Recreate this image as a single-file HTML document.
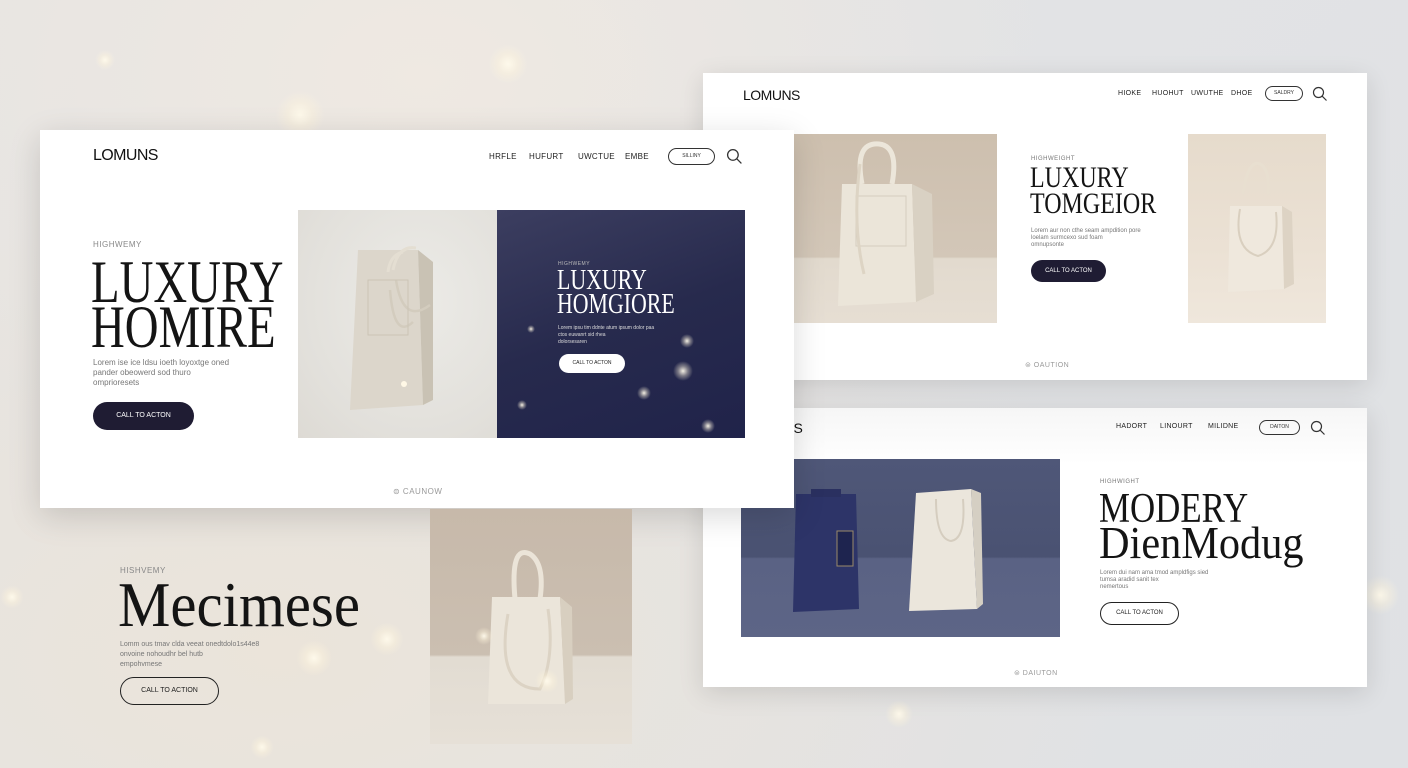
<!DOCTYPE html>
<html><head><meta charset="utf-8"><style>
*{margin:0;padding:0;box-sizing:border-box}
body{width:1408px;height:768px;overflow:hidden;position:relative;font-family:"Liberation Sans",sans-serif;
background:radial-gradient(ellipse at 20% 85%,#ebe4da 0%,rgba(235,228,218,0) 55%),radial-gradient(ellipse at 30% 10%,#efe9e2 0%,rgba(239,233,226,0) 45%),linear-gradient(135deg,#e6e4e2 0%,#e2e3e5 50%,#dfe1e4 100%)}
.a{position:absolute}
.card{position:absolute;background:#fff;box-shadow:0 6px 24px rgba(0,0,0,.12)}
.serif{font-family:"Liberation Serif",serif;color:#141414;line-height:1;transform-origin:0 0;white-space:nowrap}
.nav{font-size:8px;color:#222;letter-spacing:.3px}
.sm{font-size:7px;color:#777;letter-spacing:.5px}
.body{font-size:8px;color:#777;line-height:10px}
.pill{position:absolute;border:1px solid #333;border-radius:12px;font-size:5px;text-align:center;color:#333}
.dot{position:absolute;border-radius:50%;background:radial-gradient(circle,rgba(255,250,235,.95) 0%,rgba(255,245,220,.4) 35%,rgba(255,245,220,0) 70%)}
</style></head><body>

<div class="dot" style="left:488px;top:44px;width:40px;height:40px"></div>
<div class="dot" style="left:275px;top:90px;width:50px;height:50px"></div>
<div class="dot" style="left:95px;top:50px;width:20px;height:20px"></div>
<div class="dot" style="left:0px;top:585px;width:24px;height:24px"></div>
<div class="dot" style="left:296px;top:640px;width:36px;height:36px"></div>
<div class="dot" style="left:370px;top:622px;width:34px;height:34px"></div>
<div class="dot" style="left:250px;top:735px;width:24px;height:24px"></div>
<div class="dot" style="left:1360px;top:575px;width:40px;height:40px"></div>
<div class="dot" style="left:885px;top:700px;width:28px;height:28px"></div>

<!-- top-right card -->
<div class="card" style="left:703px;top:73px;width:664px;height:307px">
  <div class="a" style="left:40px;top:14px;font-size:14px;letter-spacing:-.5px;color:#111">LOMUNS</div>
  <div class="a nav" style="left:415px;top:17px;font-size:7px">HIOKE</div>
  <div class="a nav" style="left:449px;top:17px;font-size:7px">HUOHUT</div>
  <div class="a nav" style="left:488px;top:17px;font-size:7px">UWUTHE</div>
  <div class="a nav" style="left:528px;top:17px;font-size:7px">DHOE</div>
  <div class="pill" style="left:562px;top:13px;width:38px;height:15px;line-height:13px">SALDRY</div>
  <svg class="a" style="left:609px;top:13px" width="16" height="16" viewBox="0 0 16 16"><circle cx="6.5" cy="6.5" r="5" fill="none" stroke="#333" stroke-width="1.2"/><path d="M10.2 10.2L14.5 14.5" stroke="#333" stroke-width="1.2"/></svg>
  <div class="a" style="left:91px;top:61px;width:203px;height:189px;background:linear-gradient(180deg,#cdbfae 0%,#d3c7b8 65%,#e2dace 66%,#e6ded3 100%)">
    <svg width="203" height="189" viewBox="0 0 203 189"><path d="M68 50 Q60 8 85 10 Q105 12 98 50" fill="none" stroke="#ece6da" stroke-width="5"/><path d="M48 50 L118 50 L122 168 L44 172 Z" fill="#ebe5d9"/><path d="M118 50 L138 60 L140 160 L122 168Z" fill="#d9d1c3"/><rect x="62" y="62" width="50" height="50" fill="none" stroke="#d5cdbe"/><path d="M66 30 Q58 90 70 140" fill="none" stroke="#ddd4c4" stroke-width="3"/></svg>
  </div>
  <div class="a sm" style="left:328px;top:83px;font-size:6px">HIGHWEIGHT</div>
  <div class="a serif" style="left:327px;top:90px;font-size:30px;transform:scaleX(.8)">LUXURY</div>
  <div class="a serif" style="left:327px;top:116px;font-size:30px;transform:scaleX(.8)">TOMGEIOR</div>
  <div class="a body" style="left:328px;top:155px;font-size:6px;line-height:7px">Lorem aur non cthe seam ampdition pore<br>loelam surmcexo sud foam<br>omnupsonte</div>
  <div class="a" style="left:328px;top:187px;width:75px;height:22px;border-radius:11px;background:#1f1c33;color:#fff;font-size:6px;text-align:center;line-height:22px">CALL TO ACTON</div>
  <div class="a" style="left:485px;top:61px;width:138px;height:189px;background:linear-gradient(180deg,#e6dbcc 0%,#ebe1d4 60%,#efe7dc 100%)">
    <svg width="138" height="189" viewBox="0 0 138 189"><path d="M55 60 Q60 25 72 30 Q82 35 80 60" fill="none" stroke="#e8dfd0" stroke-width="3"/><path d="M42 72 L94 72 L96 155 L40 158Z" fill="#efe8dd"/><path d="M94 72 L104 78 L106 150 L96 155Z" fill="#ddd3c4"/><path d="M52 75 Q45 115 70 122 Q92 115 88 78" fill="none" stroke="#d9cfbf" stroke-width="2"/></svg>
  </div>
  <div class="a sm" style="left:322px;top:288px;font-size:7px;color:#999">⊜ OAUTION</div>
</div>

<!-- bottom-right card -->
<div class="card" style="left:703px;top:408px;width:664px;height:279px;background:linear-gradient(180deg,#f6f6f6 0%,#fff 20%)">
  <div class="a" style="left:40px;top:12px;font-size:14px;color:#111">LOMUNS</div>
  <div class="a nav" style="left:413px;top:15px;font-size:7px">HADORT</div>
  <div class="a nav" style="left:457px;top:15px;font-size:7px">LINOURT</div>
  <div class="a nav" style="left:505px;top:15px;font-size:7px">MILIDNE</div>
  <div class="pill" style="left:556px;top:12px;width:41px;height:15px;line-height:13px">DAITON</div>
  <svg class="a" style="left:607px;top:12px" width="16" height="16" viewBox="0 0 16 16"><circle cx="6.5" cy="6.5" r="5" fill="none" stroke="#333" stroke-width="1.2"/><path d="M10.2 10.2L14.5 14.5" stroke="#333" stroke-width="1.2"/></svg>
  <div class="a" style="left:38px;top:51px;width:319px;height:178px;background:linear-gradient(180deg,#4f5778 0%,#4a5272 55%,#5a6284 56%,#5d6586 100%)">
    <svg width="319" height="178" viewBox="0 0 319 178"><path d="M55 35 L115 35 L118 150 L52 153Z" fill="#2d3468"/><rect x="70" y="30" width="30" height="8" fill="#2a3060"/><rect x="96" y="72" width="16" height="35" fill="#1e244f" stroke="#9a8a6a"/><path d="M175 34 L230 30 L236 150 L168 152Z" fill="#ebe6dc"/><path d="M230 30 L240 34 L242 145 L236 150Z" fill="#d5cfc3"/><path d="M195 40 Q195 80 210 82 Q225 80 222 40" fill="none" stroke="#d5cdbf" stroke-width="2"/></svg>
  </div>
  <div class="a sm" style="left:397px;top:71px;font-size:6px">HIGHWIGHT</div>
  <div class="a serif" style="left:396px;top:80px;font-size:42px;transform:scaleX(.83)">MODERY</div>
  <div class="a serif" style="left:396px;top:112px;font-size:46px;transform:scaleX(.92)">DienModug</div>
  <div class="a body" style="left:397px;top:162px;font-size:6px;line-height:7px">Lorem dui nam ama tmod ampldfigs sied<br>tumsa aradid sanit tex<br>nemertous</div>
  <div class="a" style="left:397px;top:194px;width:79px;height:23px;border-radius:12px;border:1px solid #222;font-size:6px;text-align:center;line-height:21px;color:#222">CALL TO ACTON</div>
  <div class="a sm" style="left:311px;top:261px;font-size:7px;color:#999">⊜ DAIUTON</div>
</div>

<!-- front card -->
<div class="card" style="left:40px;top:130px;width:754px;height:378px;box-shadow:0 8px 30px rgba(0,0,0,.15)">
  <div class="a" style="left:53px;top:17px;font-size:16px;letter-spacing:-.6px;color:#111">LOMUNS</div>
  <div class="a nav" style="left:449px;top:22px">HRFLE</div>
  <div class="a nav" style="left:489px;top:22px">HUFURT</div>
  <div class="a nav" style="left:538px;top:22px">UWCTUE</div>
  <div class="a nav" style="left:585px;top:22px">EMBE</div>
  <div class="pill" style="left:628px;top:18px;width:47px;height:17px;line-height:15px">SILLINY</div>
  <svg class="a" style="left:686px;top:18px" width="17" height="17" viewBox="0 0 16 16"><circle cx="6.5" cy="6.5" r="5" fill="none" stroke="#333" stroke-width="1.2"/><path d="M10.2 10.2L14.5 14.5" stroke="#333" stroke-width="1.2"/></svg>
  <div class="a sm" style="left:53px;top:110px;font-size:8px;color:#888">HIGHWEMY</div>
  <div class="a serif" style="left:51px;top:122px;font-size:60px;transform:scaleX(.78)">LUXURY</div>
  <div class="a serif" style="left:51px;top:167px;font-size:60px;transform:scaleX(.78)">HOMIRE</div>
  <div class="a body" style="left:53px;top:228px;font-size:8px;line-height:10px">Lorem ise ice ldsu ioeth loyoxtge oned<br>pander obeowerd sod thuro<br>omprioresets</div>
  <div class="a" style="left:53px;top:272px;width:101px;height:28px;border-radius:14px;background:#1f1c33;color:#fff;font-size:7px;text-align:center;line-height:28px">CALL TO ACTON</div>
  <div class="a" style="left:258px;top:80px;width:199px;height:228px;background:radial-gradient(ellipse at 60% 40%,#ecebe7 0%,#e2e0db 70%,#dddad4 100%)">
    <svg width="199" height="228" viewBox="0 0 199 228"><path d="M60 40 L120 40 L125 195 L52 200Z" fill="#dcd6cb"/><path d="M120 40 L135 52 L135 190 L125 195Z" fill="#c9c2b4"/><path d="M95 60 Q100 35 118 38 M90 62 Q92 45 105 42" fill="none" stroke="#e4ded2" stroke-width="3"/><path d="M92 80 Q96 130 115 112 M98 70 Q105 115 132 95" fill="none" stroke="#d3ccbe" stroke-width="2.5"/><rect x="70" y="70" width="40" height="55" fill="none" stroke="#cbc4b6"/><circle cx="106" cy="174" r="3" fill="#fff8e6"/></svg>
  </div>
  <div class="a" style="left:457px;top:80px;width:248px;height:228px;background:linear-gradient(160deg,#3c3e60 0%,#272a4d 50%,#20234a 100%);overflow:hidden">
    <div class="a sm" style="left:61px;top:51px;font-size:5px;color:#bbb">HIGHWEMY</div>
    <div class="a serif" style="left:60px;top:57px;font-size:28px;color:#fff;transform:scaleX(.78)">LUXURY</div>
    <div class="a serif" style="left:60px;top:81px;font-size:28px;color:#fff;transform:scaleX(.78)">HOMGIORE</div>
    <div class="a" style="left:61px;top:115px;font-size:5px;color:#ddd;line-height:7px">Lorem ipsu tim ddnte atum ipsum dolor paa<br>ctos euwanrt sid rhea<br>dolorsesaren</div>
    <div class="a" style="left:62px;top:144px;width:66px;height:19px;border-radius:10px;background:#fff;color:#222;font-size:5px;text-align:center;line-height:19px">CALL TO ACTON</div>
    <div class="dot" style="left:176px;top:151px;width:20px;height:20px"></div>
    <div class="dot" style="left:183px;top:124px;width:14px;height:14px"></div>
    <div class="dot" style="left:140px;top:176px;width:14px;height:14px"></div>
    <div class="dot" style="left:204px;top:209px;width:14px;height:14px"></div>
    <div class="dot" style="left:20px;top:190px;width:10px;height:10px"></div>
    <div class="dot" style="left:30px;top:115px;width:8px;height:8px"></div>
  </div>
  <div class="a sm" style="left:353px;top:357px;font-size:8px;color:#999">⊜ CAUNOW</div>
</div>

<!-- bottom-left section -->
<div class="a sm" style="left:120px;top:566px;font-size:8px;color:#888">HISHVEMY</div>
<div class="a serif" style="left:118px;top:573px;font-size:64px;transform:scaleX(.92)">Mecimese</div>
<div class="a body" style="left:120px;top:640px;font-size:7px;line-height:10px">Lomm ous tmav clda veeat onedtdolo1s44e8<br>onvoine nohoudhr bel hutb<br>empohvmese</div>
<div class="a" style="left:120px;top:677px;width:99px;height:28px;border-radius:14px;border:1px solid #222;font-size:7px;text-align:center;line-height:26px;color:#222">CALL TO ACTION</div>
<div class="a" style="left:430px;top:509px;width:202px;height:235px;background:linear-gradient(180deg,#c7b9aa 0%,#cbbfb1 62%,#e2dcd2 63%,#e6e0d7 100%)">
  <svg width="202" height="235" viewBox="0 0 202 235"><path d="M85 90 Q80 35 100 45 Q115 55 110 90" fill="none" stroke="#ebe4d8" stroke-width="5"/><path d="M62 88 L130 88 L135 195 L58 195Z" fill="#ebe5da"/><path d="M130 88 L142 98 L143 190 L135 195Z" fill="#d8cfc0"/><path d="M78 105 Q65 180 110 180 Q125 150 118 100" fill="none" stroke="#dcd3c4" stroke-width="3"/></svg>
  <div class="dot" style="left:105px;top:160px;width:24px;height:24px"></div>
  <div class="dot" style="left:45px;top:118px;width:18px;height:18px"></div>
</div>
</body></html>
